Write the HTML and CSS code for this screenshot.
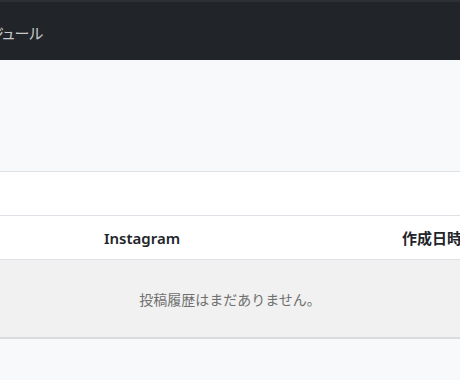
FILE: index.html
```html
<!DOCTYPE html>
<html lang="ja">
<head>
    <meta charset="UTF-8">
    <title>スケジュール</title>
    <link rel="stylesheet" href="styles.css">
</head>
<body>

<header class="navbar">
    <span class="navbar-brand">スケジュール</span>
</header>

<main class="content">
    <section class="history">
        <div class="history-toolbar"></div>
        <div class="history-head">
            <div class="history-col">Instagram</div>
            <div class="history-col">作成日時</div>
        </div>
        <div class="history-empty">投稿履歴はまだありません。</div>
    </section>
</main>

</body>
</html>
```

FILE: styles.css
```css
body {
    font-family: "Noto Sans", "Noto Sans CJK JP", sans-serif;
    background-color: #f8f9fa;
    color: #212529;
    margin: 0;
    overflow: hidden;
}

.navbar {
    height: 58px;
    background-color: #212529;
    border-top: 2px solid #2c3035;
    display: flex;
    align-items: center;
}

.navbar-brand {
    margin-left: -38px;
    margin-top: 2px;
    font-size: 15px;
    font-feature-settings: "palt";
    letter-spacing: -0.3px;
    color: #c8cacc;
    white-space: nowrap;
}

.content {
    padding-top: 111px;
}

.history {
    overflow: hidden;
}

.history-toolbar {
    height: 43px;
    background-color: #fff;
    border-top: 1px solid #dee2e6;
    border-bottom: 1px solid #dee2e6;
}

.history-head {
    display: grid;
    grid-template-columns: 284px 296px;
    height: 43px;
    background-color: #fff;
    border-bottom: 1px solid #dee2e6;
    white-space: nowrap;
}

.history-col {
    display: flex;
    align-items: center;
    justify-content: center;
    font-size: 15px;
    font-weight: 600;
}

.history-empty {
    height: 77px;
    display: flex;
    align-items: center;
    justify-content: center;
    background-color: #f1f1f1;
    border-bottom: 2px solid #dcdcdc;
    font-size: 14px;
    color: #6f6f6f;
}
```
